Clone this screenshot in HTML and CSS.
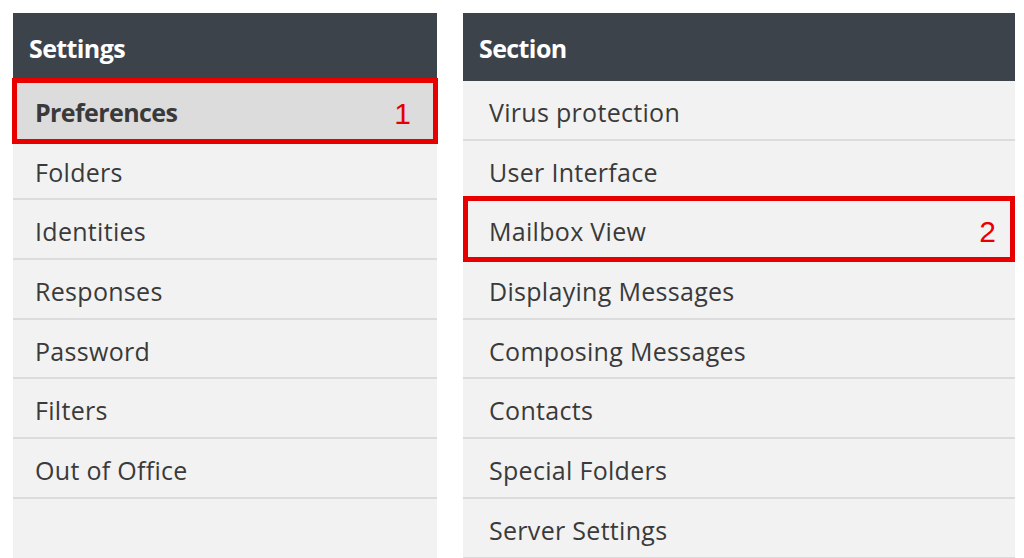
FILE: index.html
```html
<!DOCTYPE html>
<html lang="en">
<head>
    <meta charset="UTF-8">
    <title>Settings</title>
    <link rel="stylesheet" href="styles.css">
</head>
<body>
    <div class="panels">
        <!-- Settings menu -->
        <div class="panel panel-settings">
            <div class="panel-header">Settings</div>
            <ul class="menu">
                <li class="menu-item selected">Preferences<span class="callout callout-1">1</span></li>
                <li class="menu-item">Folders</li>
                <li class="menu-item">Identities</li>
                <li class="menu-item">Responses</li>
                <li class="menu-item">Password</li>
                <li class="menu-item">Filters</li>
                <li class="menu-item">Out of Office</li>
            </ul>
        </div>

        <!-- Section list -->
        <div class="panel panel-section">
            <div class="panel-header">Section</div>
            <ul class="menu">
                <li class="menu-item">Virus protection</li>
                <li class="menu-item">User Interface</li>
                <li class="menu-item">Mailbox View<span class="callout callout-2">2</span></li>
                <li class="menu-item">Displaying Messages</li>
                <li class="menu-item">Composing Messages</li>
                <li class="menu-item">Contacts</li>
                <li class="menu-item">Special Folders</li>
                <li class="menu-item">Server Settings</li>
            </ul>
        </div>
    </div>
</body>
</html>
```

FILE: styles.css
```css
/* Base */
* {
    box-sizing: border-box;
    margin: 0;
    padding: 0;
}

body {
    font-family: 'Open Sans', 'DejaVu Sans', sans-serif;
    background: #fff;
    padding: 13px 9px 0 13px;
    overflow: hidden;
}

.panels {
    display: grid;
    grid-template-columns: 424px 552px;
    gap: 26px;
    align-items: stretch;
}

/* Panels */
.panel {
    background: #f2f2f2;
    min-height: 560px;
}

.panel-header {
    background: #3d434b;
    color: #fff;
    height: 68px;
    display: flex;
    align-items: center;
    padding-left: 16px;
    padding-top: 2px;
    font-size: 25px;
    font-weight: 700;
    letter-spacing: -0.6px;
}

/* Menu rows */
.menu {
    list-style: none;
}

.menu-item {
    position: relative;
    height: 59.7px;
    display: flex;
    align-items: center;
    padding-left: 22px;
    padding-top: 4px;
    font-size: 25px;
    letter-spacing: 0.3px;
    color: #3a3a3a;
    border-bottom: 2px solid #dcdcdc;
}

.panel-section .menu-item {
    padding-left: 26px;
}

.menu-item.selected {
    background: #dcdcdc;
    font-weight: 700;
    letter-spacing: -0.6px;
}

/* Red annotation boxes */
.callout {
    position: absolute;
    border: 5px solid #e80000;
    display: flex;
    align-items: center;
    justify-content: flex-end;
    font-family: 'Liberation Sans', Arial, sans-serif;
    font-weight: 400;
    font-size: 30px;
    letter-spacing: 0;
    color: #e80000;
}

.callout-1 {
    top: -3px;
    bottom: -5px;
    left: -1px;
    right: -1px;
    padding-right: 22px;
    padding-top: 6px;
}

.callout-2 {
    top: -4px;
    bottom: -4px;
    left: 0;
    right: 0;
    padding-right: 14px;
    padding-top: 6px;
}
```
